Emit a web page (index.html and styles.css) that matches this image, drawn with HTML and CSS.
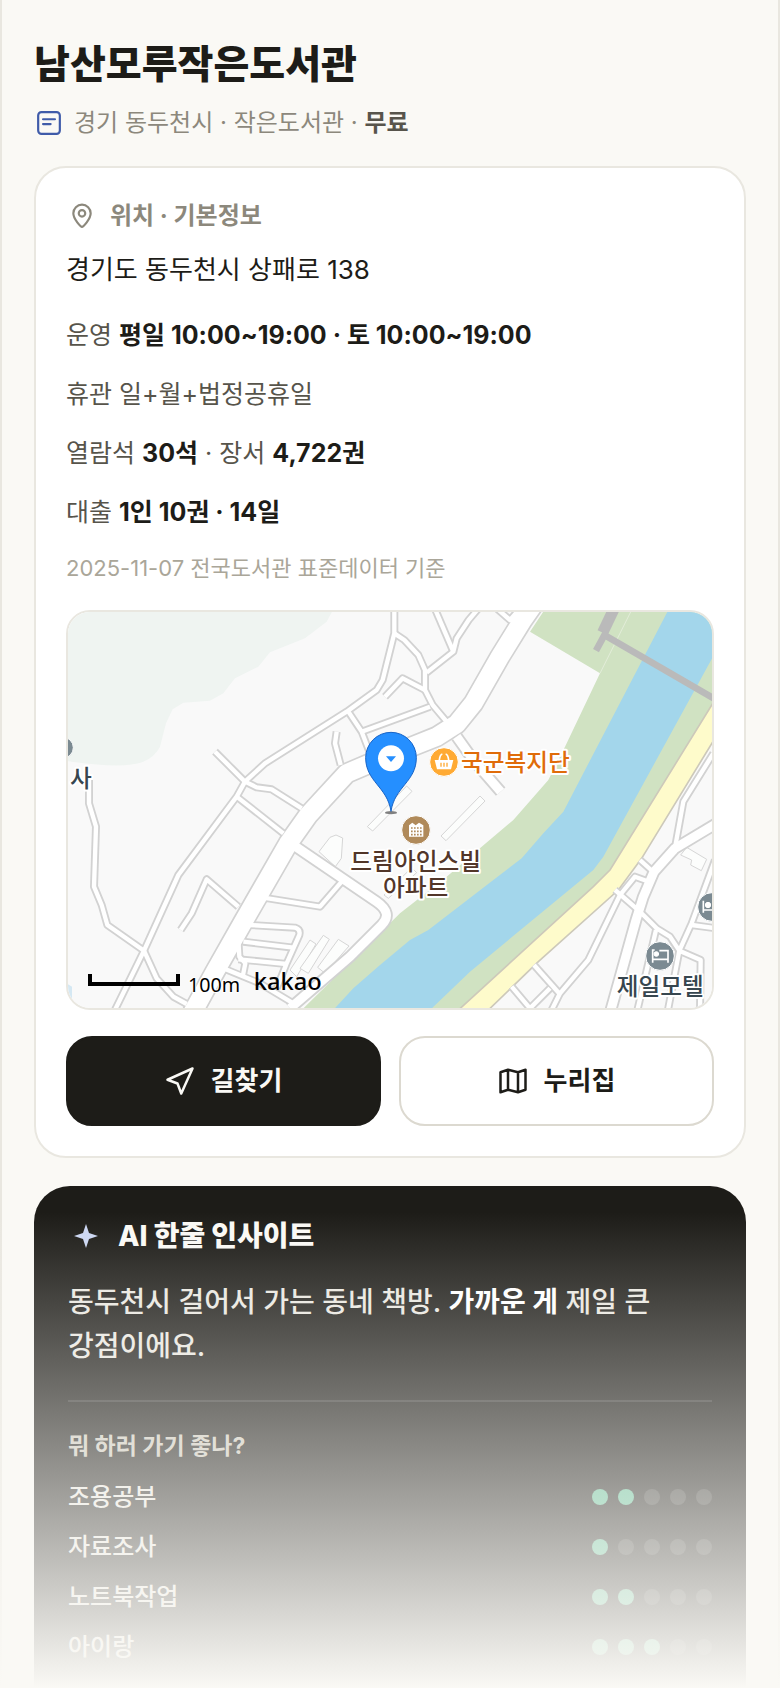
FILE: index.html
```html
<!DOCTYPE html>
<html lang="ko">

<head>
    <meta charset="UTF-8">
    <meta name="viewport" content="width=device-width, initial-scale=1">
    <title>남산모루작은도서관</title>
    <link rel="stylesheet" href="styles.css">
</head>

<body>
    <main class="page">
        <header class="place-header">
            <h1>남산모루작은도서관</h1>
            <p class="place-meta">
                <svg class="icon icon-type" viewBox="0 0 24 24" aria-hidden="true">
                    <rect x="2" y="2" width="20" height="20" rx="3" />
                    <path d="M6.500 8.500h11M6.500 13h7" />
                </svg>
                <span>경기 동두천시 · 작은도서관 · <b>무료</b></span>
            </p>
        </header>

        <section class="card">
            <h2 class="card-title">
                <svg class="icon" viewBox="0 0 24 24" aria-hidden="true">
                    <path d="M12 22c-1 0-8-7-8-12.500a8 8 0 0 1 16 0C20 15 13 22 12 22z" />
                    <circle cx="12" cy="9.500" r="3" />
                </svg>
                위치 · 기본정보
            </h2>

            <p class="address">경기도 동두천시 상패로 138</p>
            <p class="info">운영 <b>평일 10:00~19:00 · 토 10:00~19:00</b></p>
            <p class="info">휴관 일+월+법정공휴일</p>
            <p class="info">열람석 <b>30석</b> · 장서 <b>4,722권</b></p>
            <p class="info">대출 <b>1인 10권 · 14일</b></p>
            <p class="source">2025-11-07 전국도서관 표준데이터 기준</p>

            <div class="map">
                <svg viewBox="24 36 1932 1188" preserveAspectRatio="xMidYMid slice" role="img" aria-label="지도">
                    <defs>
                        <g id="lanes">
                            <path d="M87 540V610L108 680L102 860L125 915L142 975L252 1052L290 1135L340 1190L380 1212" />
                            <path d="M155 1250L252 1052L355 825L530 590L555 545L615 490L860 335L950 270L968 240L1003 100V20" />
                            <path d="M465 455L555 545L590 562L635 568L725 625" />
                            <path d="M530 590L670 700" />
                            <path d="M865 335L905 395L930 460" />
                            <path d="M905 395L1110 320" />
                            <path d="M842 495L825 430L830 395" />
                            <path d="M535 920L440 838L395 940L362 990" />
                            <path d="M610 893L780 920L845 845" />
                            <path d="M570 975L705 983Q722 988 718 1005L680 1090L650 1165" />
                            <path d="M550 1025L700 1043" />
                            <path d="M535 1078L680 1092" />
                            <path d="M535 1020L538 1070L556 1090L548 1130" />
                            <path d="M490 1105L600 1150L700 1210" />
                            <path d="M1003 100L1033 120L1075 165L1095 210V270L1118 315L1160 365" />
                            <path d="M1122 20L1180 155" />
                            <path d="M1260 20L1226 60L1190 115L1180 155L1100 218" />
                            <path d="M1310 25L1350 60L1385 20" />
                            <path d="M975 290L1028 235L1095 270" />
                            <path d="M1960 460L1870 605L1842 760" />
                            <path d="M1740 780L1790 825" />
                            <path d="M1680 885L1725 830L1775 848" />
                            <path d="M1665 870L1740 935L1790 985L1830 1010L1858 1052L1922 1080L1920 1240" />
                            <path d="M1680 885L1585 1080L1500 1180L1470 1240" />
                            <path d="M1422 1095L1502 1185" />
                            <path d="M1355 1160L1410 1225L1470 1165" />
                            <path d="M1965 780L1895 970L1858 1052L1822 1240" />
                            <path d="M1895 975L1970 985" />
                            <path d="M1788 990L1730 1240" />
                        </g>
                        <g id="streets">
                            <path d="M700 735L950 905Q1000 940 965 975L870 1070L690 1225" />
                            <path d="M1190 410L1240 480L1270 515L1322 575" />
                            <path d="M1970 670L1845 745L1782 815L1750 890L1728 960L1650 1240" />
                        </g>
                        <path id="main-road" d="M380 1270L465 1115L550 965L685 730L745 645L860 520L930 490L1060 438L1130 410L1190 372L1240 310L1320 170L1388 60L1430 0" />
                    </defs>

                    <!-- hill, river and banks -->
                    <rect class="land" x="0" y="0" width="2000" height="1260" />
                    <path class="hill" d="M0 0H835L800 65L735 115L630 157L595 200L525 235L490 280L450 302L370 308L338 328L318 370L300 440Q285 470 250 485Q190 510 0 480z" />
                    <path class="pond" d="M20 1150L36 1160V1240H20z" />
                    <path class="bank" d="M1460 20L1410 95L1620 220L1515 440L1465 540L1360 660L1265 740L1160 830L1020 940L720 1235H1210L1600 860L1650 810L1980 290V20z" />
                    <path class="bank-line" d="M1620 220L1720 20" />
                    <path class="river" d="M1825 30L1510 635L1450 700L1385 775L1300 840L1105 990L1050 1020L960 1095L880 1165L815 1235H1105L1230 1115L1600 810L1630 770L1970 150V20z" />
                    <path class="highway" d="M1980 275L1650 810L1600 860L1190 1235H1280L1435 1085L1675 870L1745 775L1980 390z" />

                    <!-- buildings -->
                    <g class="building">
                        <path d="M922 680L1040 558L1056 574L938 693z" />
                        <path d="M1143 708L1260 588L1275 603L1158 722z" />
                        <path d="M777 755L810 712L828 705L848 714L844 775L826 800z" />
                        <path d="M690 1110L750 1020L768 1032L710 1130z" />
                        <path d="M720 1105L790 1006L808 1018L745 1120z" />
                        <path d="M773 1102L835 1018L867 1038L795 1120z" />
                        <path d="M972 885L1055 803L1070 818L985 895z" />
                        <path d="M1862 765L1880 742L1940 778L1924 812L1892 795L1895 780z" />
                    </g>

                    <!-- roads: casing first, white on top -->
                    <use href="#lanes" class="lanes-casing" />
                    <use href="#streets" class="streets-casing" />
                    <use href="#main-road" class="main-casing" />
                    <use href="#lanes" class="lanes-fill" />
                    <use href="#streets" class="streets-fill" />
                    <use href="#main-road" class="main-fill" />

                    <path class="bridge bridge-end" d="M1665 20L1628 98" />
                    <path class="bridge" d="M1636 100L1608 152M1635 106L1980 306" />

                    <!-- places -->
                    <g class="place place-temple">
                        <circle cx="8" cy="443" r="32" />
                        <text x="30" y="560">사</text>
                    </g>
                    <g class="place place-shop">
                        <circle cx="1152" cy="486" r="43" />
                        <path class="glyph" d="M1124 480h56l-7 28h-42z" />
                        <path class="glyph-line" d="M1138 480q2-16 9-18M1166 480q-2-16-9-18" />
                        <path class="slots" d="M1143 488v12M1152 488v12M1161 488v12" />
                        <text x="1203" y="512">국군복지단</text>
                    </g>
                    <g class="place place-home">
                        <circle cx="1068" cy="690" r="43" />
                        <path class="glyph" d="M1047 676l10-8 10 8 10-8 13 8v34h-43z" />
                        <path class="windows" d="M1053 684h32M1053 694h32M1053 704h32" />
                        <text x="1067" y="810" text-anchor="middle">드림아인스빌</text>
                        <text x="1067" y="888" text-anchor="middle">아파트</text>
                    </g>
                    <g class="place place-hotel">
                        <circle cx="1956" cy="921" r="43" />
                        <path class="glyph-line" d="M1930 902v36M1930 930h50" />
                        <circle class="glyph" cx="1944" cy="915" r="8" />
                        <circle cx="1800" cy="1068" r="43" />
                        <path class="glyph-line" d="M1778 1048v40M1776 1050h8M1778 1078h46v10M1798 1052h26v26" />
                        <circle class="glyph" cx="1789" cy="1062" r="7" />
                        <text x="1670" y="1186">제일모텔</text>
                    </g>

                    <!-- marker -->
                    <ellipse class="pin-shadow" cx="993" cy="638" rx="18" ry="5" />
                    <path class="pin" d="M993 634C982 560 917 545 917 473a76 76 0 0 1 152 0C1069 545 1004 560 993 634z" />
                    <circle class="pin-hole" cx="993" cy="475" r="39" />
                    <path class="pin-arrow" d="M978 469h30l-15 17z" />

                    <!-- scale -->
                    <path class="scale" d="M90 1122v30h264v-30" />
                    <text class="scale-text" x="384" y="1175">100m</text>
                    <text class="map-brand" x="581" y="1169">kakao</text>
                </svg>
            </div>

            <div class="actions">
                <button type="button" class="btn btn-dark">
                    <svg class="icon btn-icon" viewBox="0 0 24 24" aria-hidden="true">
                        <path d="M22 2L2 11l8 3 3 8z" />
                    </svg>
                    <span>길찾기</span>
                </button>
                <button type="button" class="btn">
                    <svg class="icon btn-icon" viewBox="0 0 24 24" aria-hidden="true">
                        <path d="M2 5l6-2 8 2 6-2v16l-6 2-8-2-6 2zM8 3v16M16 5v16" />
                    </svg>
                    <span>누리집</span>
                </button>
            </div>
        </section>

        <section class="insight">
            <h2 class="insight-title">
                <svg class="spark" viewBox="0 0 24 24" aria-hidden="true">
                    <path d="M12 0l3 9 9 3-9 3-3 9-3-9-9-3 9-3z" />
                </svg>
                AI 한줄 인사이트
            </h2>
            <p class="insight-text">동두천시 걸어서 가는 동네 책방. <b>가까운 게</b> 제일 큰 강점이에요.</p>

            <h3 class="score-title">뭐 하러 가기 좋나?</h3>
            <ul class="scores">
                <li>조용공부 <span class="dots"><i class="on"></i><i class="on"></i><i></i><i></i><i></i></span></li>
                <li>자료조사 <span class="dots"><i class="on"></i><i></i><i></i><i></i><i></i></span></li>
                <li>노트북작업 <span class="dots"><i class="on"></i><i class="on"></i><i></i><i></i><i></i></span></li>
                <li>아이랑 <span class="dots"><i class="on"></i><i class="on"></i><i class="on"></i><i></i><i></i></span></li>
            </ul>
        </section>

        <div class="fade"></div>
    </main>
</body>

</html>
```

FILE: styles.css
```css
* {
    box-sizing: border-box;
}

body {
    margin: 0;
    background: #faf9f5;
    color: #1d1c18;
    font-family: Inter, "Noto Sans CJK KR", sans-serif;
    word-break: keep-all;
}

h1,
h2,
h3,
p,
ul {
    margin: 0;
    padding: 0;
}

.page {
    position: relative;
    display: flex;
    flex-direction: column;
    min-height: 100vh;
    padding: 36px 32px 0;
    border-left: 2px solid #e9e7e0;
    border-right: 2px solid #e9e7e0;
}

h1 {
    font-size: 39px;
    font-weight: 800;
    line-height: 56px;
}

.icon {
    width: 26px;
    height: 26px;
    flex: none;
    fill: none;
    stroke: currentColor;
    stroke-width: 2;
    stroke-linecap: round;
    stroke-linejoin: round;
}

.place-meta {
    display: flex;
    align-items: center;
    gap: 12px;
    margin: 12px 0 24px;
    padding-left: 2px;
    color: #8c887c;
    font-size: 24px;
    line-height: 38px;
}

.place-meta b {
    color: #57544b;
    font-weight: 600;
}

.icon-type {
    color: #3f5ba9;
}

.card {
    padding: 30px;
    background: #fff;
    border: 2px solid #e9e7e0;
    border-radius: 32px;
}

.card-title {
    display: flex;
    align-items: center;
    gap: 15px;
    padding-left: 3px;
    color: #8c887c;
    font-size: 24px;
    font-weight: 700;
    line-height: 36px;
}

.address {
    margin-top: 16px;
    font-size: 26px;
    line-height: 40px;
}

.info {
    margin-top: 19px;
    color: #57544b;
    font-size: 25px;
    line-height: 40px;
}

.address + .info {
    margin-top: 25px;
}

.info b {
    color: #1d1c18;
    font-weight: 700;
}

.source {
    margin-top: 20px;
    color: #aaa699;
    font-size: 22px;
    line-height: 32px;
}

.map {
    margin-top: 26px;
    overflow: hidden;
    border: 2px solid #e9e7e0;
    border-radius: 24px;
}

.map svg {
    display: block;
    width: 100%;
}

.land {
    fill: #f9f9f9;
}

.hill {
    fill: #eff4f1;
}

.pond {
    fill: #d5e8f3;
}

.bank {
    fill: #d0e2c2;
}

.bank-line {
    stroke: #e2ecd8;
    stroke-width: 3;
}

.river {
    fill: #a3d6eb;
}

.highway {
    fill: #fefbcb;
    stroke: #cdc9ba;
    stroke-width: 5;
}

.building path {
    fill: #fcfdfc;
    stroke: #d6d6d6;
    stroke-width: 3;
}

.lanes-casing,
.streets-casing,
.main-casing {
    fill: none;
    stroke: #d2d2d2;
    stroke-width: 24;
    stroke-linejoin: round;
}

.lanes-fill,
.streets-fill,
.main-fill {
    fill: none;
    stroke: #fff;
    stroke-width: 13;
    stroke-linejoin: round;
}

.streets-casing {
    stroke-width: 38;
}

.streets-fill {
    stroke-width: 27;
}

.main-casing {
    stroke-width: 65;
}

.main-fill {
    stroke-width: 55;
}

.bridge {
    fill: none;
    stroke: #bababa;
    stroke-width: 20;
}

.bridge-end {
    stroke-width: 34;
}

.place text {
    font-size: 71px;
    font-weight: 500;
    paint-order: stroke;
    stroke: #fff;
    stroke-width: 12;
    stroke-linejoin: round;
}

.place circle {
    stroke: #fff;
    stroke-width: 3;
}

.place-temple,
.place-hotel {
    fill: #7b8a92;
}

.place-temple text,
.place-hotel text {
    fill: #37464f;
}

.place-shop {
    fill: #ffaa33;
}

.place-shop text {
    fill: #e06c0a;
}

.place-home {
    fill: #b08a5a;
}

.place-home text {
    fill: #523629;
}

.glyph {
    fill: #fff;
}

.glyph-line {
    fill: none;
    stroke: #fff;
    stroke-width: 5;
}

.slots {
    stroke: #ffaa33;
    stroke-width: 4;
}

.windows {
    stroke: #b08a5a;
    stroke-width: 5;
    stroke-dasharray: 5 4;
}

.pin {
    fill: #258fff;
    stroke: #1763c6;
    stroke-width: 3;
}

.pin-shadow {
    fill: #808080;
}

.pin-hole {
    fill: #fff;
}

.pin-arrow {
    fill: #258fff;
}

.scale {
    fill: none;
    stroke: #000;
    stroke-width: 12;
}

.scale-text {
    font-family: "Noto Sans", sans-serif;
    font-size: 59px;
    paint-order: stroke;
    stroke: #fff;
    stroke-width: 6;
}

.map-brand {
    font-family: "Noto Sans", sans-serif;
    font-size: 71px;
    font-weight: 500;
}

.actions {
    display: grid;
    grid-template-columns: 1fr 1fr;
    gap: 18px;
    margin-top: 26px;
}

.btn {
    display: flex;
    align-items: center;
    justify-content: center;
    gap: 16px;
    height: 90px;
    padding: 0;
    background: #fff;
    border: 2px solid #dcd9d0;
    border-radius: 26px;
    color: #1d1c18;
    font-family: inherit;
    font-size: 26px;
    font-weight: 700;
    line-height: 36px;
    cursor: pointer;
}

.btn-dark {
    background: #1d1c18;
    border-color: #1d1c18;
    color: #faf9f5;
}

.btn-icon {
    width: 30px;
    height: 30px;
}

.insight {
    flex: 1;
    margin-top: 28px;
    padding: 30px 34px 16px;
    background: #1d1c18;
    border-radius: 36px 36px 0 0;
    color: #faf9f5;
}

.insight-title {
    display: flex;
    align-items: center;
    gap: 20px;
    padding-left: 6px;
    font-size: 28px;
    font-weight: 800;
    line-height: 40px;
}

.spark {
    width: 24px;
    height: 24px;
    fill: #cbd6f2;
}

.insight-text {
    margin-top: 24px;
    padding-bottom: 32px;
    border-bottom: 2px solid rgba(255, 255, 255, 0.12);
    color: #e9e7e0;
    font-size: 28px;
    font-weight: 500;
    line-height: 44px;
}

.insight-text b {
    color: #fff;
    font-weight: 700;
}

.score-title {
    margin-top: 26px;
    color: #cbc7bb;
    font-size: 23px;
    font-weight: 700;
    line-height: 36px;
}

.scores {
    margin-top: 8px;
    list-style: none;
}

.scores li {
    display: flex;
    align-items: center;
    justify-content: space-between;
    color: #e9e7e0;
    font-size: 24px;
    font-weight: 500;
    line-height: 50px;
}

.dots {
    display: flex;
    gap: 10px;
}

.dots i {
    width: 16px;
    height: 16px;
    border-radius: 50%;
    background: rgba(255, 255, 255, 0.14);
}

.dots .on {
    background: #5cbb92;
}

.fade {
    position: absolute;
    inset: auto 0 0;
    height: 476px;
    margin: 0 -2px;
    background: linear-gradient(rgba(250, 249, 245, 0), #faf9f5);
    pointer-events: none;
}
```
